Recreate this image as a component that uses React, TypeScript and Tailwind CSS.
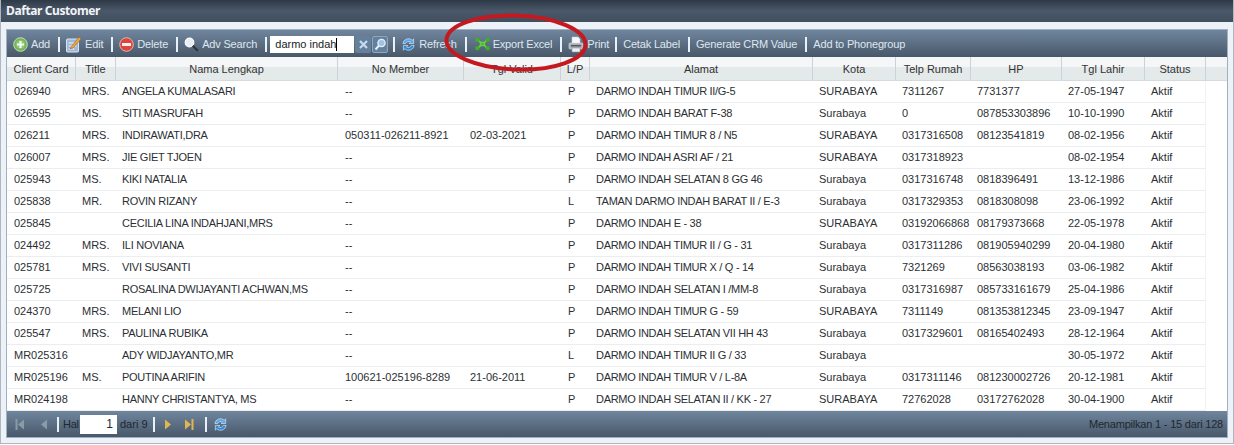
import type { ReactNode } from 'react';

type Row = string[];

const columns = [
  { title: 'Client Card', width: 'w-[69px]', cell: 'pl-[7px]' },
  { title: 'Title', width: 'w-[40px]', cell: 'pl-[6px]' },
  { title: 'Nama Lengkap', width: 'w-[222px]', cell: 'pl-[6px] tracking-[-0.27px]' },
  { title: 'No Member', width: 'w-[126px]', cell: 'pl-[7px]' },
  { title: 'Tgl Valid', width: 'w-[97px]', cell: 'pl-[6px]' },
  { title: 'L/P', width: 'w-[29px]', cell: 'pl-[7px]' },
  { title: 'Alamat', width: 'w-[223px]', cell: 'pl-[6px] tracking-[-0.3px]' },
  { title: 'Kota', width: 'w-[83px]', cell: 'pl-[6px]' },
  { title: 'Telp Rumah', width: 'w-[75px]', cell: 'pl-[6px]' },
  { title: 'HP', width: 'w-[91px]', cell: 'pl-[6px]' },
  { title: 'Tgl Lahir', width: 'w-[83px]', cell: 'pl-[6px]' },
  { title: 'Status', width: 'w-[61px]', cell: 'pl-[6px]' },
];

const rows: Row[] = [
  ['026940', 'MRS.', 'ANGELA KUMALASARI', '--', '', 'P', 'DARMO INDAH TIMUR II/G-5', 'SURABAYA', '7311267', '7731377', '27-05-1947', 'Aktif'],
  ['026595', 'MS.', 'SITI MASRUFAH', '--', '', 'P', 'DARMO INDAH BARAT F-38', 'Surabaya', '0', '087853303896', '10-10-1990', 'Aktif'],
  ['026211', 'MRS.', 'INDIRAWATI,DRA', '050311-026211-8921', '02-03-2021', 'P', 'DARMO INDAH TIMUR 8 / N5', 'SURABAYA', '0317316508', '08123541819', '08-02-1956', 'Aktif'],
  ['026007', 'MRS.', 'JIE GIET TJOEN', '--', '', 'P', 'DARMO INDAH ASRI AF / 21', 'SURABAYA', '0317318923', '', '08-02-1954', 'Aktif'],
  ['025943', 'MS.', 'KIKI NATALIA', '--', '', 'P', 'DARMO INDAH SELATAN 8 GG 46', 'Surabaya', '0317316748', '0818396491', '13-12-1986', 'Aktif'],
  ['025838', 'MR.', 'ROVIN RIZANY', '--', '', 'L', 'TAMAN DARMO INDAH BARAT II / E-3', 'Surabaya', '0317329353', '0818308098', '23-06-1992', 'Aktif'],
  ['025845', '', 'CECILIA LINA INDAHJANI,MRS', '--', '', 'P', 'DARMO INDAH E - 38', 'SURABAYA', '03192066868', '08179373668', '22-05-1978', 'Aktif'],
  ['024492', 'MRS.', 'ILI NOVIANA', '--', '', 'P', 'DARMO INDAH TIMUR II / G - 31', 'Surabaya', '0317311286', '081905940299', '20-04-1980', 'Aktif'],
  ['025781', 'MRS.', 'VIVI SUSANTI', '--', '', 'P', 'DARMO INDAH TIMUR X / Q - 14', 'Surabaya', '7321269', '08563038193', '03-06-1982', 'Aktif'],
  ['025725', '', 'ROSALINA DWIJAYANTI ACHWAN,MS', '--', '', 'P', 'DARMO INDAH SELATAN I /MM-8', 'Surabaya', '0317316987', '085733161679', '25-04-1986', 'Aktif'],
  ['024370', 'MRS.', 'MELANI LIO', '--', '', 'P', 'DARMO INDAH TIMUR G - 59', 'SURABAYA', '7311149', '081353812345', '23-09-1947', 'Aktif'],
  ['025547', 'MRS.', 'PAULINA RUBIKA', '--', '', 'P', 'DARMO INDAH SELATAN VII HH 43', 'Surabaya', '0317329601', '08165402493', '28-12-1964', 'Aktif'],
  ['MR025316', '', 'ADY WIDJAYANTO,MR', '--', '', 'L', 'DARMO INDAH TIMUR II G / 33', 'Surabaya', '', '', '30-05-1972', 'Aktif'],
  ['MR025196', 'MS.', 'POUTINA ARIFIN', '100621-025196-8289', '21-06-2011', 'P', 'DARMO INDAH TIMUR V / L-8A', 'Surabaya', '0317311146', '081230002726', '20-12-1981', 'Aktif'],
  ['MR024198', '', 'HANNY CHRISTANTYA, MS', '--', '', 'P', 'DARMO INDAH SELATAN II / KK - 27', 'SURABAYA', '72762028', '03172762028', '30-04-1900', 'Aktif'],
];

function Sep({ className = 'ml-[8px] mr-[6px]' }: { className?: string }) {
  return <span className={`h-[15px] w-[2px] shrink-0 bg-[#e8f0f8] ${className}`} />;
}

function Tool({ icon, label }: { icon?: ReactNode; label: string }) {
  return (
    <span className="flex shrink-0 items-center gap-[3px]">
      {icon}
      <span>{label}</span>
    </span>
  );
}

function AddIcon() {
  return (
    <svg width="15" height="15" viewBox="0 0 15 15" className="shrink-0">
      <circle cx="7.5" cy="7.5" r="6.8" fill="#74b35a" stroke="#c3dfb3" />
      <circle cx="7.5" cy="7.5" r="4.6" fill="#8cc873" />
      <path d="M7.5 4v7M4 7.5h7" stroke="#f6fcf2" strokeWidth="2.2" />
    </svg>
  );
}

function EditIcon() {
  return (
    <svg width="16" height="18" viewBox="0 0 16 18" className="shrink-0">
      <rect x="0.500" y="4" width="12" height="13" rx="1" fill="#9db7dd" stroke="#dbe6f5" />
      <path d="M2.500 8h8M2.500 11h8M2.500 14h6" stroke="#f2f6fc" />
      <path d="M5 12l8-10 2 2-8 9-3 1z" fill="#e8a93a" stroke="#a9651c" strokeWidth=".6" />
    </svg>
  );
}

function DeleteIcon() {
  return (
    <svg width="15" height="15" viewBox="0 0 15 15" className="shrink-0">
      <circle cx="7.5" cy="7.5" r="6.8" fill="#d9483f" stroke="#f0b0a5" />
      <rect x="3" y="6" width="9" height="3" fill="#fbeeea" />
    </svg>
  );
}

function MagnifierIcon() {
  return (
    <svg width="15" height="15" viewBox="0 0 15 15" className="shrink-0">
      <circle cx="5.5" cy="5.5" r="4.2" fill="#e8eef4" stroke="#f7f9fb" strokeWidth="1.4" />
      <path d="M8.800 8.800l5 5" stroke="#2f343a" strokeWidth="2.2" />
    </svg>
  );
}

function RefreshIcon({ size = 15 }: { size?: number }) {
  return (
    <svg width={size} height={size} viewBox="0 0 16 16" className="shrink-0">
      <path d="M2 7a6 6 0 0 1 10-3.600L13.500 2v5h-5l1.700-1.600A3.500 3.500 0 0 0 5 7z" fill="#5aa5e6" stroke="#d6ecfb" strokeWidth=".7" />
      <path d="M14 9a6 6 0 0 1-10 3.600L2.500 14V9h5l-1.700 1.600A3.500 3.500 0 0 0 11 9z" fill="#3486d4" stroke="#d6ecfb" strokeWidth=".7" />
    </svg>
  );
}

function ExportIcon() {
  return (
    <svg width="15" height="14" viewBox="0 0 16 14" className="shrink-0">
      <path d="M3 2.500l3 3h4l3-3M3 11.500l3-3h4l3 3M6 5.500v3M10 5.500v3" fill="none" stroke="#62d43a" strokeWidth="1.800" />
      <rect x="0.500" y="0.500" width="4" height="4" fill="#3fb022" />
      <rect x="11.500" y="0.500" width="4" height="4" fill="#3fb022" />
      <rect x="0.500" y="9.500" width="4" height="4" fill="#3fb022" />
      <rect x="11.500" y="9.500" width="4" height="4" fill="#3fb022" />
    </svg>
  );
}

function PrintIcon() {
  return (
    <svg width="16" height="17" viewBox="0 0 16 17" className="shrink-0">
      <path d="M4 1h6l2 2v5H4z" fill="#f5f7fa" stroke="#c8d0d8" strokeWidth=".6" />
      <rect x="1" y="7" width="14" height="6" rx="1" fill="#aab0b6" stroke="#dfe3e7" strokeWidth=".6" />
      <rect x="3" y="9" width="10" height="1.500" fill="#55595e" />
      <rect x="4" y="12" width="8" height="4" fill="#eef1f4" stroke="#8d9399" strokeWidth=".6" />
    </svg>
  );
}

function ClearButton() {
  return (
    <span className="ml-[1px] flex h-[17px] w-[16px] shrink-0 items-center justify-center rounded-[2px] bg-[#65809c]">
      <svg width="11" height="11" viewBox="0 0 11 11">
        <path d="M2 2l7 7M9 2l-7 7" stroke="#c8daee" strokeWidth="2.200" />
      </svg>
    </span>
  );
}

function SearchButton() {
  return (
    <span className="ml-[1px] flex h-[17px] w-[16px] shrink-0 items-center justify-center rounded-[2px] border border-[#8fa6bd] bg-[#65809c]">
      <svg width="13" height="13" viewBox="0 0 13 13">
        <circle cx="7.500" cy="5" r="3.600" fill="#9fc3e6" stroke="#e4f0fb" strokeWidth="1.300" />
        <path d="M5 7.500L1.500 11.500" stroke="#e4f0fb" strokeWidth="2" />
      </svg>
    </span>
  );
}

function PagerIcon({ dir, end, color }: { dir: 'left' | 'right'; end?: boolean; color: string }) {
  return (
    <svg width="11" height="13" viewBox="0 0 11 13" className="shrink-0">
      {dir === 'left' ? (
        <>
          <path d="M9 1.500v10l-6-5z" fill={color} />
          {end && <rect x="0.500" y="1" width="2" height="11" fill={color} />}
        </>
      ) : (
        <>
          <path d="M2 1.500v10l6-5z" fill={color} />
          {end && <rect x="8.500" y="1" width="2" height="11" fill={color} />}
        </>
      )}
    </svg>
  );
}

export default function App() {
  return (
    <div className="relative h-[445px] w-[1234px] overflow-hidden bg-white font-['Liberation_Sans',Arial,sans-serif] text-[11px] text-[#2b2f33]">
      <div className="flex h-[444px] flex-col border-b border-l border-r border-[#aeb6bf] bg-[#edf2f8]">
        <div className="flex h-[22px] shrink-0 items-center bg-gradient-to-b from-[#2e3947] via-[#4b5869] to-[#414e5e] pl-[5px] font-['Noto_Sans',sans-serif] text-[12px] font-bold tracking-[-0.4px] text-[#f1f4f7]">
          Daftar Customer
        </div>

        <div className="mx-[5px] mt-[7px] flex h-[409px] flex-col border border-[#9eb0c2] bg-white">
          <div className="flex h-[27px] shrink-0 items-center bg-gradient-to-b from-[#70869e] to-[#48586a] pl-[6px] pt-px tracking-[-0.17px] text-[#dfe7ef]">
            <Tool icon={<AddIcon />} label="Add" />
            <Sep />
            <Tool icon={<EditIcon />} label="Edit" />
            <Sep />
            <Tool icon={<DeleteIcon />} label="Delete" />
            <Sep />
            <Tool icon={<MagnifierIcon />} label="Adv Search" />
            <Sep className="ml-[8px] mr-[3px]" />
            <span className="flex h-[17px] w-[84px] shrink-0 items-center bg-white pl-[5px] tracking-normal text-[#222]">
              darmo indah
              <span className="h-[13px] w-px bg-black" />
            </span>
            <ClearButton />
            <SearchButton />
            <Sep className="ml-[5px] mr-[6px]" />
            <Tool icon={<RefreshIcon />} label="Refresh" />
            <Sep className="ml-[8px] mr-[8px]" />
            <Tool icon={<ExportIcon />} label="Export Excel" />
            <Sep />
            <Tool icon={<PrintIcon />} label="Print" />
            <Sep className="ml-[6px] mr-[6px]" />
            <Tool label="Cetak Label" />
            <Sep />
            <Tool label="Generate CRM Value" />
            <Sep />
            <Tool label="Add to Phonegroup" />
          </div>

          <div className="flex h-[24px] shrink-0 border-b border-[#d5dade] bg-[linear-gradient(#f4f6f7_45%,#e4e9ea_45%)]">
            {columns.map(c => (
              <div key={c.title} className={`${c.width} flex shrink-0 items-center justify-center border-r border-[#ccd2d7] pt-px text-[#333]`}>
                {c.title}
              </div>
            ))}
          </div>

          <div className="flex-1 overflow-hidden">
            {rows.map(r => (
              <div key={r[0]} className="flex h-[22px] w-[1199px] border-b border-r border-b-[#ebedee] border-r-[#f0f2f3]">
                {r.map((v, i) => (
                  <div key={i} className={`${columns[i].width} ${columns[i].cell} flex shrink-0 items-center whitespace-nowrap`}>
                    {v}
                  </div>
                ))}
              </div>
            ))}
          </div>

          <div className="flex h-[26px] shrink-0 items-center justify-between bg-gradient-to-b from-[#70869e] to-[#48586a] text-[#1f2730]">
            <div className="flex items-center pl-[8px]">
              <PagerIcon dir="left" end color="#8a9aa9" />
              <span className="w-[12px]" />
              <PagerIcon dir="left" color="#8a9aa9" />
              <Sep className="ml-[8px] mr-[4px]" />
              <span className="w-[16px] tracking-[-0.3px]">Hal</span>
              <span className="ml-px flex h-[19px] w-[37px] items-center justify-end bg-white pr-[4px] text-[12px]">1</span>
              <span className="ml-[3px]">dari 9</span>
              <Sep className="ml-[5px] mr-[8px]" />
              <PagerIcon dir="right" color="#e2b552" />
              <span className="w-[9px]" />
              <PagerIcon dir="right" end color="#e2b552" />
              <Sep className="ml-[11px] mr-[6px]" />
              <RefreshIcon />
            </div>
            <span className="pr-[4px] tracking-[-0.2px]">Menampilkan 1 - 15 dari 128</span>
          </div>
        </div>
      </div>

      {/* marker drawn on top of the screenshot */}
      <svg className="absolute left-[436px] top-[8px]" width="164" height="68" viewBox="0 0 164 68" fill="none">
        <ellipse cx="80" cy="34.500" rx="69.500" ry="27" stroke="#c41a1f" strokeWidth="4" transform="rotate(2 80 34.500)" />
      </svg>
    </div>
  );
}
